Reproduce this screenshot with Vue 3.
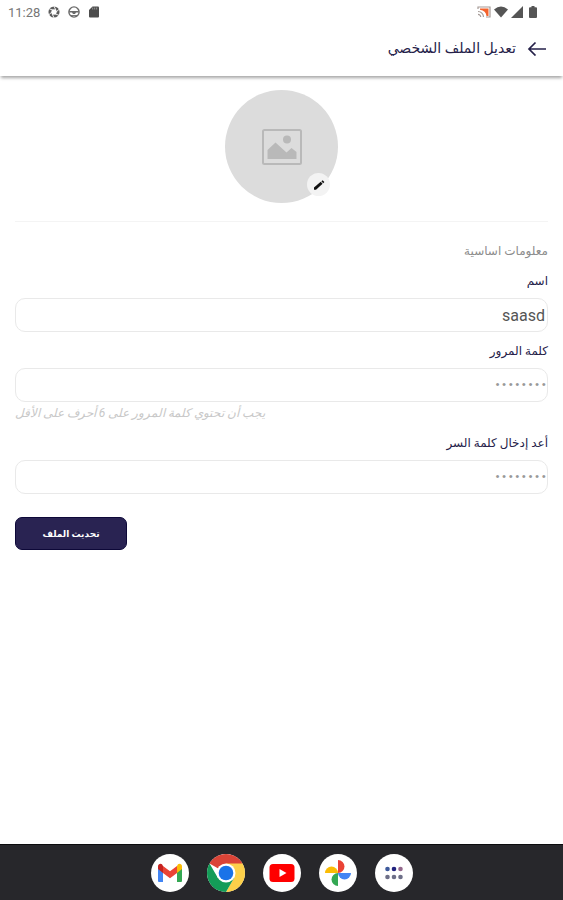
<script setup>
import { ref } from 'vue'

const name = ref('saasd')
const password = ref('abcd1234')
const confirmation = ref('abcd1234')
</script>

<template>
  <div class="screen" dir="rtl" lang="ar">
    <div class="status" dir="ltr">
      <div class="status-group">
        <span class="clock">11:28</span>
        <svg class="status-icon" viewBox="0 0 12 12" aria-hidden="true">
          <circle cx="6" cy="6" r="4.1" fill="none" stroke="#5c5c5c" stroke-width="2.9" />
          <path d="M6 .2 8 4.4M11.2 3.2 7.9 6.2M10.8 9.2 6.8 7.8M6 11.8 4 7.6M.8 8.8 4.1 5.8M1.2 2.8 5.2 4.2" stroke="#fff" stroke-width=".9" />
        </svg>
        <svg class="status-icon" viewBox="0 0 12 12" aria-hidden="true">
          <circle cx="6" cy="6" r="5.1" fill="none" stroke="#6a6a6a" stroke-width="1.4" />
          <path d="M1.2 5h9.6v1.4H8L7 8H5L4 6.4H1.2z" fill="#6a6a6a" />
          <path d="M3 9.6h6" stroke="#6a6a6a" />
        </svg>
        <svg class="status-icon" viewBox="0 0 12 12" aria-hidden="true">
          <path d="M4.5.5H10q1 0 1 1v9q0 1-1 1H2q-1 0-1-1V4z" fill="#4c4c4c" />
          <path d="M4.7 1.5v2M6.7 1.5v2M8.7 1.5v2" stroke="#aaa" stroke-width=".8" />
        </svg>
      </div>
      <div class="status-group signals">
        <svg class="cast" viewBox="0 0 14 12" aria-hidden="true">
          <path d="M1 3V1h12v10H9" fill="none" stroke="#a59a96" stroke-width="1.2" />
          <path d="M3 2.500H11.500v7.500H9.500C9 6.500 7 4.300 3 3.800z" fill="#f4622c" />
          <path d="M1 5.500A5.500 5.500 0 0 1 6.500 11M1 8.300A2.700 2.700 0 0 1 3.700 11" fill="none" stroke="#a59a96" stroke-width="1.2" />
        </svg>
        <svg class="wifi" viewBox="0 0 14 12" aria-hidden="true">
          <path d="M0 3.5Q7-2.5 14 3.5L7 11.5z" fill="#555" />
        </svg>
        <svg class="status-icon" viewBox="0 0 12 12" aria-hidden="true">
          <path d="M12 0v12H0z" fill="#555" />
        </svg>
        <svg class="battery" viewBox="0 0 8 12" aria-hidden="true">
          <path d="M2.5 0h3v1.2H7q1 0 1 1V11q0 1-1 1H1q-1 0-1-1V2.2q0-1 1-1h1.5z" fill="#555" />
        </svg>
      </div>
    </div>

    <header class="appbar">
      <button class="back" type="button" aria-label="رجوع">
        <svg viewBox="0 0 20 16" aria-hidden="true">
          <path d="M19 9H2M8.5 2.5 2 9l6.500 6.500" fill="none" stroke="#252149" stroke-width="1.7" />
        </svg>
      </button>
      <h1>تعديل الملف الشخصي</h1>
    </header>

    <main>
      <div class="avatar">
        <svg class="placeholder" viewBox="0 0 40 36" aria-hidden="true">
          <rect x="1" y="1" width="38" height="34" rx="1.5" fill="none" stroke="#b9b9b9" stroke-width="2" />
          <path d="M5.500 30V21L13.500 13.500 24.500 23.500l5-4.500 5 4v7z" fill="#b9b9b9" />
          <circle cx="25" cy="10.5" r="4" fill="#b9b9b9" />
        </svg>
        <button class="edit" type="button" aria-label="تعديل الصورة">
          <svg viewBox="0 0 12 12" aria-hidden="true">
            <path d="M1 8.5 7.7 2.8 9.6 4.8 3 10.7H1z" fill="#111" />
            <path d="m8.4 2.200 1.200-1 1.800 1.900-1.200 1.100z" fill="#111" />
          </svg>
        </button>
      </div>

      <form @submit.prevent>
        <h2>معلومات اساسية</h2>
        <div class="field">
          <label for="name">اسم</label>
          <input id="name" v-model="name" type="text" />
        </div>
        <div class="field">
          <label for="password">كلمة المرور</label>
          <input id="password" v-model="password" type="password" aria-describedby="hint" />
          <p id="hint">يجب أن تحتوي كلمة المرور على 6 أحرف على الأقل</p>
        </div>
        <div class="field">
          <label for="confirmation">أعد إدخال كلمة السر</label>
          <input id="confirmation" v-model="confirmation" type="password" />
        </div>
        <button class="submit" type="submit">تحديث الملف</button>
      </form>
    </main>

    <nav class="dock" dir="ltr">
      <button type="button" aria-label="Gmail">
        <svg viewBox="0 0 38 38" aria-hidden="true">
          <path d="M7 13v14q0 1 1 1h4V16z" fill="#4285f4" />
          <path d="M26 16v12h4q1 0 1-1V13z" fill="#34a853" />
          <path d="M26 12v7l5-4v-2.500c0-2.500-2.500-3.500-4-2.200z" fill="#fbbc04" />
          <path d="M12 12v7l7 5.200 7-5.200v-7l-7 5.200z" fill="#ea4335" />
          <path d="M7 12.500V15l5 4v-7l-1-1.700c-1.500-1.300-4-.3-4 2.200z" fill="#c5221f" />
        </svg>
      </button>
      <button type="button" aria-label="Chrome">
        <svg viewBox="0 0 38 38" aria-hidden="true">
          <path d="M19 19 2.550 9.500A19 19 0 0 1 35.450 9.500z" fill="#db4437" />
          <path d="M19 9.500H35.450A19 19 0 0 1 19 38L27.200 23.700z" fill="#fdd04a" />
          <path d="M10.800 23.700 2.550 9.500A19 19 0 0 0 19 38L27.200 23.700z" fill="#149c58" />
          <circle cx="19" cy="19" r="9.500" fill="#fff" />
          <circle cx="19" cy="19" r="7.300" fill="#1a73e8" />
        </svg>
      </button>
      <button type="button" aria-label="YouTube">
        <svg viewBox="0 0 38 38" aria-hidden="true">
          <rect x="6.500" y="10" width="25" height="18" rx="3.500" fill="#f00" />
          <path d="m16.500 15 7 4-7 4z" fill="#fff" />
        </svg>
      </button>
      <button type="button" aria-label="Photos">
        <svg viewBox="0 0 38 38" aria-hidden="true">
          <path d="M19 6a6.500 6.500 0 0 1 0 13z" fill="#ea4335" />
          <path d="M32 19a6.500 6.500 0 0 1-13 0z" fill="#4285f4" />
          <path d="M19 32a6.500 6.500 0 0 1 0-13z" fill="#34a853" />
          <path d="M6 19a6.500 6.500 0 0 1 13 0z" fill="#fbbc04" />
        </svg>
      </button>
      <button type="button" aria-label="Apps">
        <svg viewBox="0 0 38 38" aria-hidden="true">
          <g fill="#3d5a9c">
            <circle cx="12.500" cy="15" r="2.300" />
            <circle cx="19" cy="15" r="2.300" fill="#22237e" />
            <circle cx="25.500" cy="15" r="2.300" fill="#94688c" />
          </g>
          <g fill="#6d6f88">
            <circle cx="12.500" cy="23" r="2.300" />
            <circle cx="19" cy="23" r="2.300" />
            <circle cx="25.500" cy="23" r="2.300" />
          </g>
        </svg>
      </button>
    </nav>
  </div>
</template>

<style>
body {
  margin: 0;
}
</style>

<style scoped>
.screen {
  display: flex;
  flex-direction: column;
  min-height: 100vh;
  background: #fff;
  color: #252149;
  font-family: Roboto, "DejaVu Sans", sans-serif;
}
.screen * {
  box-sizing: border-box;
}
svg {
  display: block;
}
button {
  border: 0;
  padding: 0;
  cursor: pointer;
  font-family: inherit;
}
.status {
  display: flex;
  justify-content: space-between;
  height: 24px;
  padding: 0 26px 0 8px;
}
.status-group {
  display: flex;
  align-items: center;
  gap: 8px;
}
.signals {
  gap: 3px;
}
.clock {
  color: #777;
  font-size: 13px;
}
.status-icon {
  width: 12px;
  height: 12px;
}
.cast,
.wifi {
  width: 14px;
  height: 12px;
}
.battery {
  width: 8px;
  height: 12px;
  margin-left: 3px;
}
.appbar {
  display: flex;
  align-items: center;
  gap: 11px;
  height: 52px;
  padding: 0 16px 4px;
  box-shadow: 0 3px 3px -1px rgba(0, 0, 0, 0.35);
}
.back {
  background: none;
}
.back svg {
  width: 20px;
  height: 16px;
}
h1 {
  margin: 0;
  font-size: 14px;
  font-weight: 400;
}
main {
  flex: 1;
  padding: 14px 15px;
}
.avatar {
  position: relative;
  display: grid;
  place-items: center;
  width: 113px;
  height: 113px;
  margin: 0 auto 18px;
  border-radius: 50%;
  background: #dcdcdc;
}
.placeholder {
  width: 40px;
  height: 36px;
}
.edit {
  position: absolute;
  right: 8px;
  bottom: 7px;
  display: grid;
  place-items: center;
  width: 23px;
  height: 23px;
  border-radius: 50%;
  background: #f3f3f3;
}
.edit svg {
  width: 12px;
  height: 12px;
}
form {
  padding-top: 19px;
  border-top: 1px solid #f4f4f4;
}
h2 {
  margin: 0 0 10px;
  color: #8c8c8c;
  font-size: 12px;
  font-weight: 400;
  line-height: 20px;
}
.field {
  margin-bottom: 9px;
}
label {
  display: block;
  margin-bottom: 7px;
  font-size: 12px;
  line-height: 20px;
}
input {
  display: block;
  width: 100%;
  height: 34px;
  padding: 0 2px;
  border: 1px solid #e9e9e9;
  border-radius: 10px;
  background: #fff;
  color: #555;
  font-family: Roboto, sans-serif;
  font-size: 16px;
}
input[type="password"] {
  padding: 0;
  color: #999;
  font-family: "Liberation Mono", monospace;
  font-size: 11px;
}
#hint {
  margin: 0;
  padding: 1px 0;
  color: #c8c8c8;
  font-size: 12px;
  font-style: italic;
  line-height: 20px;
  text-align: left;
}
.submit {
  display: block;
  width: 112px;
  height: 33px;
  margin: 23px auto 0 0;
  border: 1px solid #0d0838;
  border-radius: 7px;
  background: #292352;
  color: #fff;
  font-size: 9px;
  font-weight: 700;
}
.dock {
  display: flex;
  align-items: center;
  justify-content: center;
  gap: 18px;
  height: 56px;
  border-top: 1px solid #0c0c0e;
  background: #27272b;
}
.dock button {
  width: 38px;
  height: 38px;
  border-radius: 50%;
  background: #fff;
}
.dock svg {
  width: 38px;
  height: 38px;
}
</style>
